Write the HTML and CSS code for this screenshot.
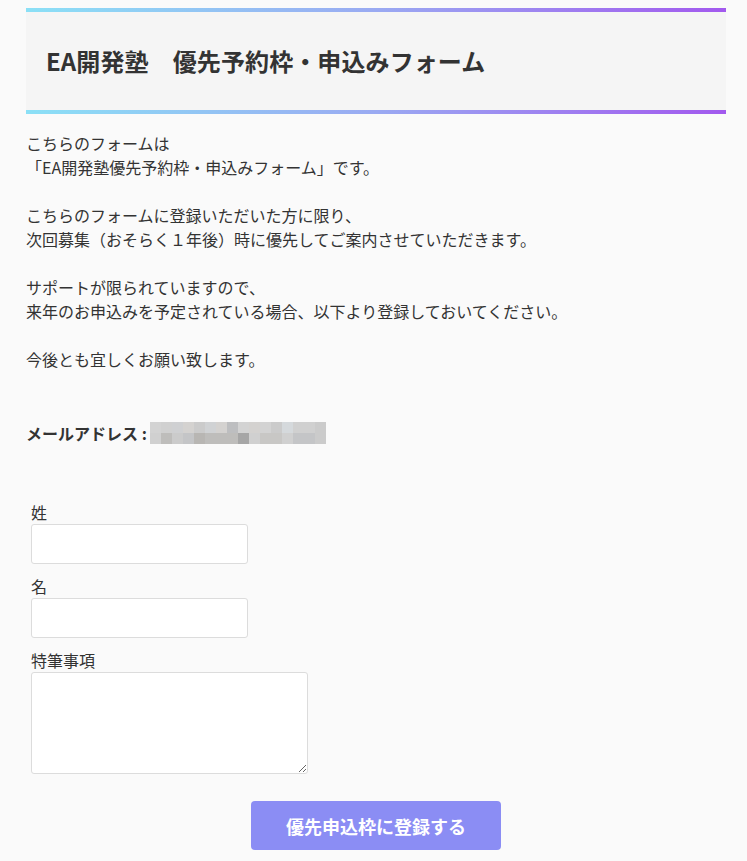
FILE: index.html
```html
<!DOCTYPE html>
<html lang="ja">
<head>
<meta charset="utf-8">
<title>EA開発塾　優先予約枠・申込みフォーム</title>
<link rel="stylesheet" href="styles.css">
</head>
<body>
<div class="page">
  <header class="head">
    <h1 class="title">EA開発塾　優先予約枠・申込みフォーム</h1>
  </header>

  <p class="intro">こちらのフォームは<br>「EA開発塾優先予約枠・申込みフォーム」です。<br><br>こちらのフォームに登録いただいた方に限り、<br>次回募集（おそらく１年後）時に優先してご案内させていただきます。<br><br>サポートが限られていますので、<br>来年のお申込みを予定されている場合、以下より登録しておいてください。<br><br>今後とも宜しくお願い致します。</p>

  <p class="email"><span class="email-label">メールアドレス :</span><span class="mosaic"><i class="g1"></i><i class="g2"></i><i class="g3"></i><i class="g4"></i><i class="g5"></i><i class="g6"></i><i class="g4"></i><i class="g7"></i><i class="g1"></i><i class="g4"></i><i class="g1"></i><i class="g5"></i><i class="g8"></i><i class="g2"></i><i class="g2"></i><i class="g5"></i><i class="g2"></i><i class="g9"></i><i class="g5"></i><i class="g10"></i><i class="g11"></i><i class="g9"></i><i class="g9"></i><i class="g9"></i><i class="g12"></i><i class="g2"></i><i class="g13"></i><i class="g13"></i><i class="g2"></i><i class="g10"></i><i class="g10"></i><i class="g5"></i></span></p>

  <form class="form">
    <label class="field-label" for="sei">姓</label>
    <input class="field" id="sei" type="text">
    <label class="field-label" for="mei">名</label>
    <input class="field" id="mei" type="text">
    <label class="field-label" for="note">特筆事項</label>
    <textarea class="area" id="note"></textarea>
    <div class="actions">
      <button class="submit" type="button">優先申込枠に登録する</button>
    </div>
  </form>
</div>
</body>
</html>
```

FILE: styles.css
```css
* { box-sizing: border-box; }

html, body {
  margin: 0;
  padding: 0;
  background: #fafafa;
}

body {
  font-family: "Noto Sans CJK JP", "Noto Sans", "Liberation Sans", sans-serif;
  color: #333;
  font-size: 16px;
}

.page {
  width: 700px;
  margin-left: 26px;
  padding-top: 8px;
}

.head {
  background:
    linear-gradient(90deg, #8be0f6 0%, #9aaaf2 50%, #a259ee 100%) top left / 100% 4px no-repeat,
    linear-gradient(90deg, #8be0f6 0%, #9aaaf2 50%, #a259ee 100%) bottom left / 100% 4px no-repeat,
    #f5f5f5;
  padding: 36px 20px;
}

.title {
  margin: 0;
  font-size: 24px;
  line-height: 34px;
  font-weight: 700;
  color: #333;
  letter-spacing: 0.1px;
}

.intro {
  margin: 17px 0 0;
  line-height: 24px;
}

.email {
  margin: 50px 0 0;
  line-height: 24px;
  display: flex;
  align-items: center;
}

.email-label {
  font-weight: 700;
  margin-right: 3px;
}

.mosaic {
  display: grid;
  grid-template-columns: repeat(16, 11px);
  grid-auto-rows: 11px;
}

.mosaic i { display: block; }
.g1 { background: #d3d3d3; }
.g2 { background: #d0d0d0; }
.g3 { background: #cfd0d2; }
.g4 { background: #d4d2d0; }
.g5 { background: #cbcbcb; }
.g6 { background: #d0d2d4; }
.g7 { background: #bdbec0; }
.g8 { background: #d5d9dc; }
.g9 { background: #bebdbb; }
.g10 { background: #c4c5c7; }
.g11 { background: #b8b6b3; }
.g12 { background: #a6a6a6; }
.g13 { background: #c8c7c5; }

.form {
  margin-top: 55px;
  padding-left: 5px;
  display: flex;
  flex-direction: column;
  align-items: flex-start;
}

.field-label {
  display: block;
  line-height: 24px;
  font-size: 16px;
}

.field {
  width: 217px;
  height: 40px;
  margin: 0 0 10px;
  border: 1px solid #dcdcdc;
  border-radius: 3px;
  background: #fff;
  font: inherit;
  padding: 4px 8px;
}

.area {
  width: 277px;
  height: 102px;
  margin: 0;
  border: 1px solid #dcdcdc;
  border-radius: 3px;
  background: #fff;
  font: inherit;
  padding: 4px 8px;
  display: block;
}

.actions {
  align-self: stretch;
  display: flex;
  justify-content: center;
  margin-top: 27px;
  margin-left: -5px;
}

.submit {
  width: 250px;
  height: 49px;
  border: none;
  border-radius: 4px;
  background: #8b8df4;
  color: #fff;
  font-family: "Noto Sans CJK JP", "Noto Sans", sans-serif;
  font-size: 18px;
  font-weight: 700;
  cursor: pointer;
}
```
